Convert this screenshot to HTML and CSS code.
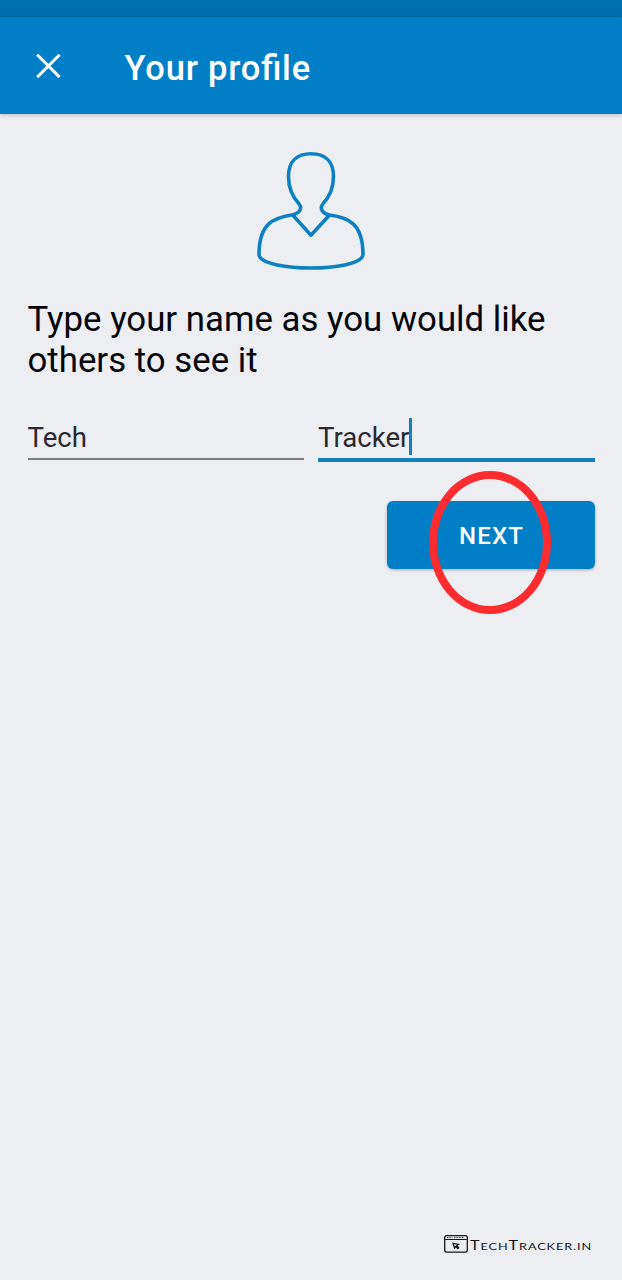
FILE: index.html
```
<!DOCTYPE html>
<html lang="en">
<head>
<meta charset="utf-8">
<meta name="viewport" content="width=device-width, initial-scale=1">
<title>Your profile</title>
<link rel="stylesheet" href="styles.css">
</head>
<body>
<div class="screen">
  <div class="status-bar"></div>
  <header class="app-bar">
    <svg class="close-icon" viewBox="0 0 26 26" aria-label="Close"><path d="M2.2 1.7 24.6 24.1M24.6 1.7 2.2 24.1"/></svg>
    <h1 class="title">Your profile</h1>
  </header>
  <main class="content">
    <svg class="avatar" viewBox="0 0 110 120">
      <path d="M35.5 64.8C43 63.5 45 58 42.5 54.5C35.5 47 31.5 36.5 31.5 26.5C31.5 11.5 40 3.8 54 3.8S76.5 11.5 76.5 26.5C76.5 36.5 73 46.5 65.5 54.5C63 58 64.5 63.3 72.5 65C91 67.5 105.8 73 106 104C106 114.5 75 118 54 118S2 114.5 2 104C2.3 73.5 16 68 35.5 64.8L54 85.2L72.5 65"/>
    </svg>
    <p class="prompt">Type your name as you would like others to see it</p>
    <div class="fields">
      <div class="field"><span>Tech</span></div>
      <div class="field focused"><span>Tracker</span><i class="caret"></i></div>
    </div>
    <div class="actions">
      <button class="next">NEXT</button>
      <span class="highlight"></span>
    </div>
  </main>
  <footer class="brand">
    <svg class="brand-icon" viewBox="0 0 24 18">
      <rect class="frame" x=".7" y=".7" width="22.6" height="16.4" rx="1.8"/>
      <path class="bar" d="M1 4.5H23"/>
      <path class="dots" d="M3 2.6H8M10 2.6H20"/>
      <path class="pointer" d="M9 8.3 14.5 9.3 12.9 10.5 14.7 12.8 13.7 13.6 11.9 11.5 10.6 13Z"/>
    </svg>
    <svg class="wordmark" viewBox="0 0 122 18"><text x="0" y="15" textLength="122" lengthAdjust="spacingAndGlyphs">T<tspan class="small">ECH</tspan>T<tspan class="small">RACKER.IN</tspan></text></svg>
  </footer>
</div>
</body>
</html>
```
FILE: styles.css
```
* { box-sizing: border-box; }
body { margin: 0; font-family: Roboto, sans-serif; background: #eceef2; }
.screen { height: 1280px; display: flex; flex-direction: column; }
.status-bar { height: 17px; background: #006fae; }
.app-bar {
  height: 97px;
  display: flex;
  align-items: center;
  padding: 1px 35px 0;
  background: #007fc7;
  box-shadow: 0 1px 4px rgba(0, 0, 0, .22);
}
.close-icon { width: 26px; height: 26px; fill: none; stroke: #fff; stroke-width: 2.9; }
.title {
  margin: 3px 0 0 63.5px;
  color: #fff;
  font-size: 34.5px;
  font-weight: 500;
  line-height: 40px;
  letter-spacing: .8px;
  font-feature-settings: "liga" 1;
}
.content { flex: 1; display: flex; flex-direction: column; padding: 36px 27.5px 0; }
.avatar {
  width: 110px;
  height: 120px;
  margin-left: 229.5px;
  fill: none;
  stroke: #0d80c0;
  stroke-width: 3.6;
  stroke-linejoin: round;
}
.prompt { margin: 29px 0 0; color: #050509; font-size: 34.8px; line-height: 40.5px; }
.fields { display: grid; grid-template-columns: 1fr 1fr; gap: 14px; margin-top: 38px; }
.field {
  height: 42px;
  display: flex;
  align-items: flex-start;
  border-bottom: 2px solid #7b7b80;
  color: #292a30;
  font-size: 27.6px;
  line-height: 40px;
}
.focused { height: 44px; border-bottom: 4px solid #137fc0; }
.caret { width: 3px; height: 37px; background: #137fc0; }
.actions { position: relative; display: flex; justify-content: flex-end; margin-top: 39px; }
.next {
  width: 208px;
  height: 68px;
  padding: 2px 0 0 2px;
  border: 0;
  border-radius: 6px;
  background: #007fc7;
  color: #fff;
  font: 500 24px/66px Roboto, sans-serif;
  letter-spacing: 1.2px;
  box-shadow: 0 1px 3px rgba(0, 0, 0, .3);
}
.highlight {
  position: absolute;
  right: 43.5px;
  top: -30px;
  width: 122px;
  height: 143px;
  border: 8px solid #fc2c30;
  border-radius: 50%;
}
.brand { display: flex; align-items: flex-start; padding: 0 30px 27px 444px; }
.brand-icon { width: 24px; height: 18px; flex: none; fill: none; stroke: #15151a; }
.frame { stroke-width: 1.3; }
.bar { stroke-width: 1; }
.dots { stroke-width: .9; stroke-dasharray: 1 .6; }
.pointer { stroke-width: 1.3; }
.wordmark { width: 122px; height: 18px; flex: none; margin-left: 2px; overflow: visible; }
.wordmark text { font: 400 12.5px Lato, sans-serif; letter-spacing: .7px; fill: #15151a; }
.wordmark .small { font-size: 9.8px; }
```
